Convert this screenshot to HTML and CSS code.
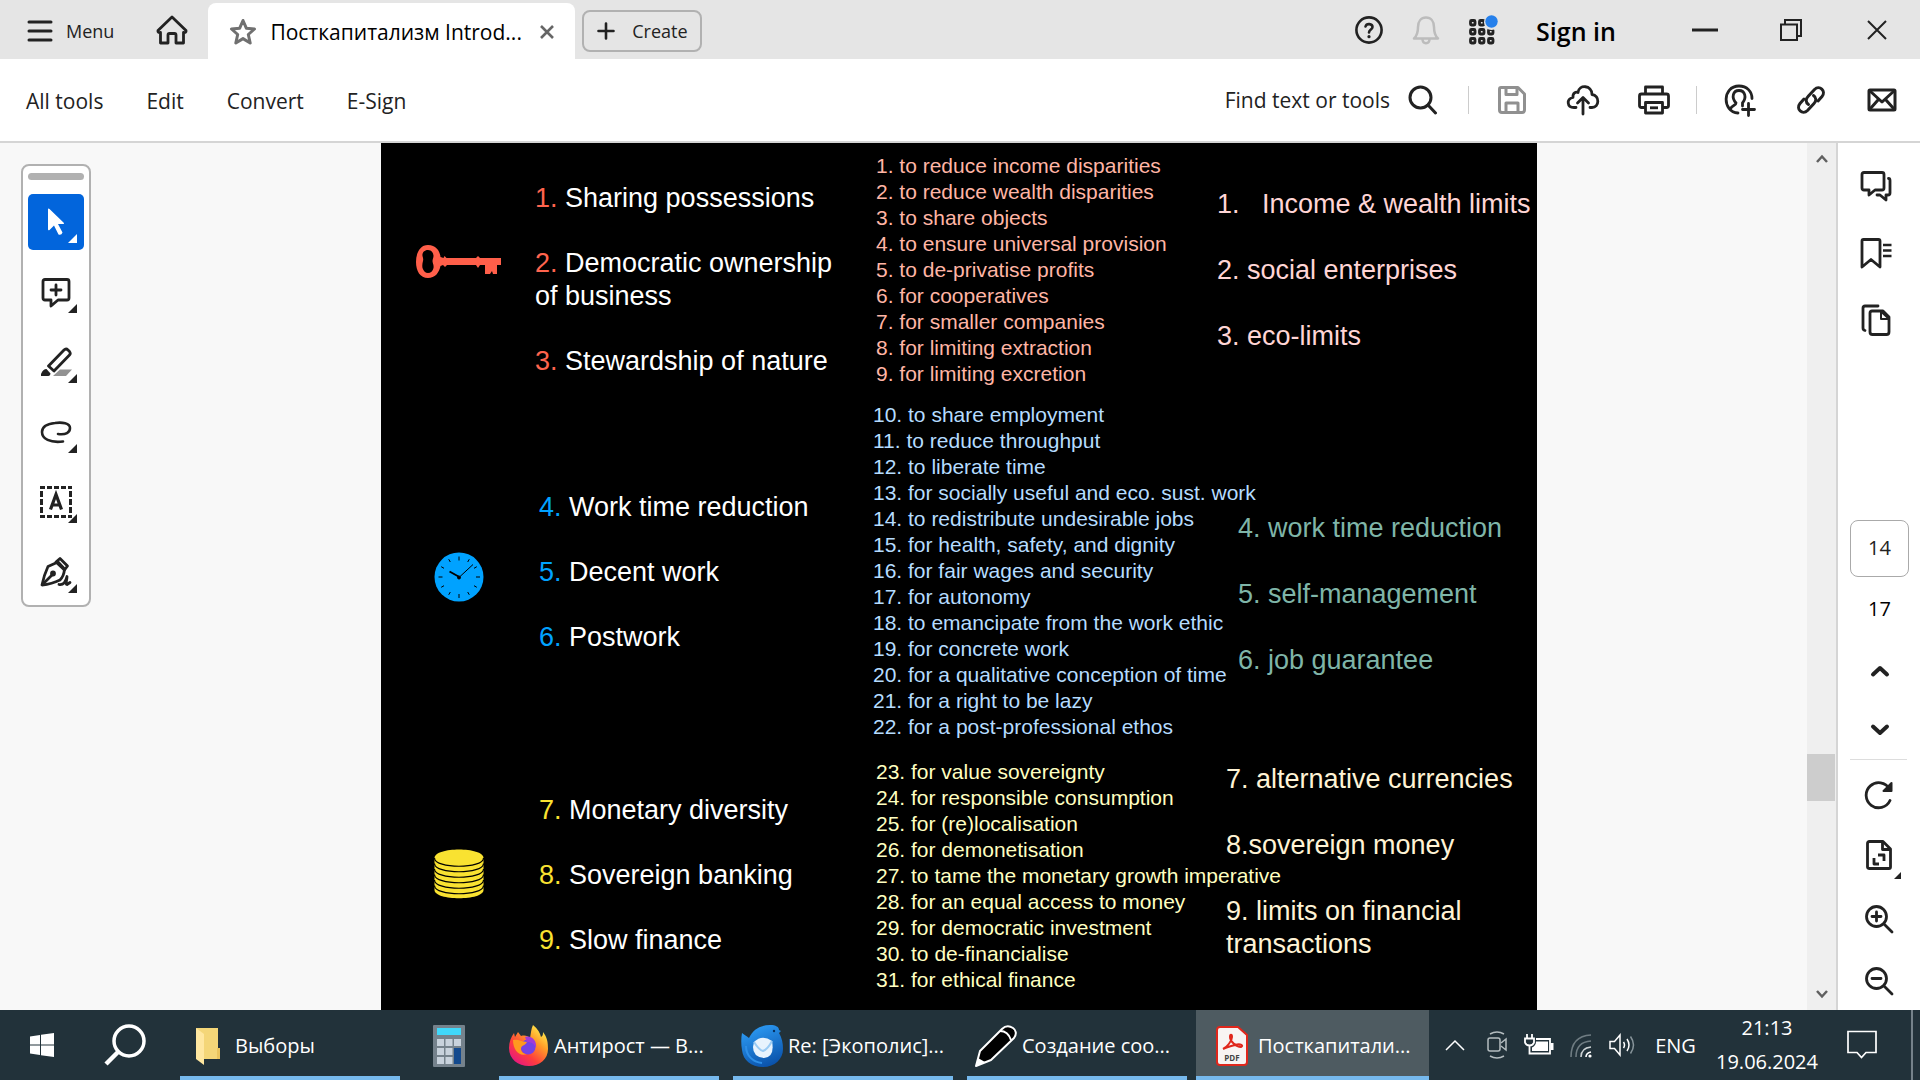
FILE: index.html
```html
<!DOCTYPE html>
<html lang="en">
<head>
  <meta charset="UTF-8" />
  <meta name="viewport" content="width=device-width, initial-scale=1" />
  <title>Посткапитализм Introduction</title>
  <link rel="stylesheet" href="styles.css">
</head>
<body>
  <header class="titlebar">
    <button class="menu-btn">
      <svg width="26" height="22" viewBox="0 0 26 22" stroke="#222" stroke-width="3" stroke-linecap="round"><path d="M2 2h22M2 11h22M2 20h22"/></svg>
      Menu
    </button>
    <button class="home-btn" aria-label="Home">
      <svg width="32" height="30" viewBox="0 0 32 30" fill="none" stroke="#222" stroke-width="2.800" stroke-linejoin="round"><path d="M16 2L30 15.500Q30.500 18 27.500 17.500V28H20V20Q20 18.500 18.500 18.500H13.500Q12 18.500 12 20V28H4.500V17.500Q1.500 18 2 15.500Z"/></svg>
    </button>
    <div class="tab">
      <svg width="28" height="28" viewBox="0 0 28 28" fill="none" stroke="#707070" stroke-width="3" stroke-linejoin="round"><path d="M14 2.500l3.300 7.700 8.200.8-6.200 5.500 1.900 8.500L14 20.600 6.800 25l1.900-8.500L2.500 11l8.200-.8z"/></svg>
      <span class="tab-name">Посткапитализм Introd...</span>
      <button class="tab-close" aria-label="Close tab">
        <svg width="14" height="14" viewBox="0 0 14 14" stroke="#666" stroke-width="2.600"><path d="M1 1l12 12M13 1L1 13"/></svg>
      </button>
    </div>
    <button class="create-btn">
      <svg width="18" height="18" viewBox="0 0 18 18" stroke="#222" stroke-width="2.600" stroke-linecap="round"><path d="M9 1.500v15M1.500 9h15"/></svg>
      Create
    </button>
    <div class="title-right">
      <button class="icon-btn" aria-label="Help">
        <svg width="30" height="30" viewBox="0 0 30 30" fill="none" stroke="#222" stroke-width="2.600" stroke-linecap="round"><circle cx="15" cy="15" r="12.600"/><path d="M11.500 11.500c1-3.500 7-3 7 .5 0 2.500-3.500 2.500-3.500 5.500"/><path d="M15 21.500v.2" stroke-width="3.200"/></svg>
      </button>
      <button class="icon-btn" aria-label="Notifications">
        <svg width="28" height="30" viewBox="0 0 28 30" fill="none" stroke="#bcbcbc" stroke-width="2.500" stroke-linejoin="round"><path d="M2 23.500c3.500-3 4-6 4-11.500 0-5.500 3-9.500 8-9.500s8 4 8 9.500c0 5.500.5 8.500 4 11.500z"/><path d="M10.500 24c0 5.500 7 5.500 7 0"/></svg>
      </button>
      <button class="icon-btn" aria-label="Apps">
        <svg width="32" height="32" viewBox="0 0 32 32" fill="none" stroke="#222" stroke-width="2.800"><rect x="3.500" y="6.500" width="4.500" height="4.500" rx="1"/><rect x="12.500" y="6.500" width="4.500" height="4.500" rx="1"/><rect x="3.500" y="15.500" width="4.500" height="4.500" rx="1"/><rect x="12.500" y="15.500" width="4.500" height="4.500" rx="1"/><rect x="21.500" y="15.500" width="4.500" height="4.500" rx="1"/><rect x="3.500" y="24.500" width="4.500" height="4.500" rx="1"/><rect x="12.500" y="24.500" width="4.500" height="4.500" rx="1"/><rect x="21.500" y="24.500" width="4.500" height="4.500" rx="1"/><circle cx="24.500" cy="8.500" r="7.500" fill="#e5e5e5" stroke="none"/><circle cx="24.500" cy="7.500" r="6.200" fill="#2680eb" stroke="none"/></svg>
      </button>
      <button class="signin">Sign in</button>
      <button class="win-btn" aria-label="Minimize">
        <svg width="26" height="24" viewBox="0 0 26 24" stroke="#222" stroke-width="3"><path d="M0 12h26"/></svg>
      </button>
      <button class="win-btn" aria-label="Restore">
        <svg width="24" height="24" viewBox="0 0 24 24" fill="none" stroke="#222" stroke-width="2"><path d="M2 6.500h16v15.500H2z"/><path d="M6 6V2h16v16h-4"/></svg>
      </button>
      <button class="win-btn" aria-label="Close">
        <svg width="20" height="20" viewBox="0 0 20 20" stroke="#222" stroke-width="2"><path d="M1 1l18 18M19 1L1 19"/></svg>
      </button>
    </div>
  </header>

  <nav class="toolbar">
    <a href="#">All tools</a>
    <a href="#">Edit</a>
    <a href="#">Convert</a>
    <a href="#">E-Sign</a>
    <div class="tool-right">
      <button class="find-btn">
        Find text or tools
        <svg width="30" height="30" viewBox="0 0 30 30" fill="none" stroke="#222" stroke-width="3" stroke-linecap="round"><circle cx="12.500" cy="12.500" r="10.500"/><path d="M20 20l7.500 8"/></svg>
      </button>
      <span class="sep"></span>
      <button class="tool-btn" aria-label="Save">
        <svg width="30" height="30" viewBox="0 0 30 30" fill="none" stroke="#909090" stroke-width="3" stroke-linejoin="round"><path d="M4 2.500h17l6.500 6.500v16q0 2.500-2.500 2.500H5q-2.500 0-2.500-2.500V4q0-1.500 1.500-1.500z"/><path d="M9 3v6.500h11V3M9 27v-9h12v9"/></svg>
      </button>
      <button class="tool-btn" aria-label="Upload">
        <svg width="34" height="32" viewBox="0 0 34 32" fill="none" stroke="#222" stroke-width="2.800" stroke-linecap="round" stroke-linejoin="round"><path d="M10 23.500H8c-7 0-8-8.500-1-10C6.500 9 10 7.500 12 8.500 13 0 26 1 26 10.500c8 1 7.500 13 0 13h-2"/><path d="M17 30V14M11.500 19L17 13.500l5.500 5.500"/></svg>
      </button>
      <button class="tool-btn" aria-label="Print">
        <svg width="32" height="32" viewBox="0 0 32 32" fill="none" stroke="#222" stroke-width="2.800" stroke-linejoin="round"><path d="M7.500 10V3h17v7M7.500 23.500h-4q-2 0-2-2V12q0-2 2-2h25q2 0 2 2v9.500q0 2-2 2h-4"/><path d="M7.500 18.500h17V29h-17z"/><path d="M12 23.800h8"/></svg>
      </button>
      <span class="sep"></span>
      <button class="tool-btn" aria-label="Add people">
        <svg width="32" height="34" viewBox="0 0 32 34" fill="none" stroke="#222" stroke-width="2.800" stroke-linecap="round"><path d="M14 30C-2 29-2 3 15 3c8 0 13 5.500 13 12.500"/><path d="M6.500 26c1-4 5.500-3 5.500-6-5-5.500-3-12.500 3-12.500s8 7 3.500 12.500V23"/><path d="M24.500 20.500v12M18.500 26.500h12"/></svg>
      </button>
      <button class="tool-btn" aria-label="Link">
        <svg width="30" height="30" viewBox="0 0 30 30" fill="none" stroke="#222" stroke-width="3" stroke-linecap="round"><path d="M12.500 19.500c-3-2-3-5.500-.5-8l6.500-7c5-5 12 1.500 7.500 7l-4 4.500"/><path d="M17.500 10.500c3 2 3 5.500.5 8l-6.500 7c-5 5-12-1.500-7.500-7L8 14"/></svg>
      </button>
      <button class="tool-btn" aria-label="Mail">
        <svg width="30" height="24" viewBox="0 0 30 24" fill="none" stroke="#222" stroke-width="3" stroke-linejoin="round"><rect x="2" y="2" width="26" height="20" rx="1"/><path d="M3 3l12 11L27 3M3 21l8-9M27 21l-8-9"/></svg>
      </button>
    </div>
  </nav>

  <main class="viewer">
    <aside class="quick-tools">
      <span class="handle"></span>
      <button class="quick selected" aria-label="Select">
        <svg width="18" height="28" viewBox="0 0 18 28"><path d="M1 1.500Q1 0 2.500 1L17 15q.5 1-1 1h-5l4.500 8.500q-1 3-4 2L7 17.500 2.500 22Q1 23 1 21z" fill="#fff"/></svg>
      </button>
      <button class="quick" aria-label="Add comment">
        <svg width="32" height="32" viewBox="0 0 32 32" fill="none" stroke="#222" stroke-width="2.800" stroke-linecap="round" stroke-linejoin="round"><path d="M5 3.500h22q2 0 2 2V22q0 2-2 2H18l-7 6v-6H5q-2 0-2-2V5.500q0-2 2-2z"/><path d="M16 9v10M11 14h10"/></svg>
      </button>
      <button class="quick" aria-label="Highlight">
        <svg width="32" height="32" viewBox="0 0 32 32" fill="none" stroke="#222" stroke-width="2.800" stroke-linejoin="round"><path d="M8.500 20L24 4q2-2 4 0l1.500 1.500q1.500 2 0 3.500L14 25z"/><path d="M1 30v-2q2-5 5.500-5l4 4.500q0 2-2 2.500z" fill="#222" stroke="none"/><path d="M20 23.500h12L26 30H13z" fill="#929292" stroke="none"/></svg>
      </button>
      <button class="quick" aria-label="Draw">
        <svg width="32" height="32" viewBox="0 0 32 32" fill="none" stroke="#222" stroke-width="2.600" stroke-linecap="round"><path d="M18 18c8 1 12-1.500 12-6C30 7 22 6 15 7 6 8 2 11.500 2 16c0 7 8 11 21 9.500"/></svg>
      </button>
      <button class="quick" aria-label="Select text">
        <svg width="32" height="32" viewBox="0 0 32 32" fill="none" stroke="#222" stroke-width="3"><path d="M0 1.500h32M0 30.500h32" stroke-dasharray="5 2"/><path d="M1.500 5v22M30.500 5v22" stroke-dasharray="6 2"/><path d="M10.500 23.500L16 8.500l5.500 15M12.500 19h7" stroke-width="3.200"/></svg>
      </button>
      <button class="quick" aria-label="Sign">
        <svg width="32" height="32" viewBox="0 0 32 32" fill="none" stroke="#222" stroke-width="2.800" stroke-linecap="round" stroke-linejoin="round"><path d="M18 6L8 10.500Q4 19 2 29q10-1 18-5 4-4 4.500-11z"/><path d="M16 6l4-3.500 7.500 7.500-3 4zM2.500 28.500L13 18"/><circle cx="13" cy="17.500" r="1.500" fill="#222"/><path d="M19 28.500c5 1 7-4 8-8 0 4-2 8 0 8l3-2"/></svg>
      </button>
    </aside>

    <article class="slide">
      <section class="theme ownership">
        <svg class="theme-icon" width="86" height="34" viewBox="0 0 86 34"><path fill="#ff5f4a" fill-rule="evenodd" d="M12 0c8 0 12 6 12.500 12l3 1 1-2 2 2H60l2-2 2 2h21v7h-4v9h-4l-1-3-2 3h-5v-9h-5l-2 3-2-3H31l-2 2-2-2-2.500 1C23 28 19 33 12 33 4 33 0 26 0 17S4 0 12 0zm0 5c-4 0-6 3-5.500 6 .5 2 1 3 .5 5s-1 4-.5 7c1 3 3 5 5.500 5s5-2 5.500-5c.5-3-1-5-1-7s1-3 1-5c0-3-2-6-5.500-6z"/></svg>
        <ol class="goals">
          <li><span class="num">1.</span> Sharing possessions</li>
          <li><span class="num">2.</span> Democratic ownership<br>of business</li>
          <li><span class="num">3.</span> Stewardship of nature</li>
        </ol>
        <ol class="details">
          <li>1. to reduce income disparities</li>
          <li>2. to reduce wealth disparities</li>
          <li>3. to share objects</li>
          <li>4. to ensure universal provision</li>
          <li>5. to de-privatise profits</li>
          <li>6. for cooperatives</li>
          <li>7. for smaller companies</li>
          <li>8. for limiting extraction</li>
          <li>9. for limiting excretion</li>
        </ol>
        <ol class="policies">
          <li>1.&nbsp; &nbsp;Income &amp; wealth limits</li>
          <li>2. social enterprises</li>
          <li>3. eco-limits</li>
        </ol>
      </section>

      <section class="theme work">
        <svg class="theme-icon" width="50" height="50" viewBox="0 0 50 50" stroke="#000"><circle cx="25" cy="25" r="24.500" fill="#00a2ff" stroke="none"/><path d="M25 4.500v4M25 42v4M4.500 25h4M42 25h4M14.700 7.200l1.600 2.800M33.700 40l1.600 2.800M7.200 14.700l2.800 1.600M40 33.700l2.800 1.600M35.300 7.200L33.700 10M16.300 40l-1.600 2.800M42.800 14.700L40 16.300M10 33.700l-2.800 1.600M26 24.500L39 12.500"/><path d="M15.500 19.500l9 5" stroke-width="2"/><circle cx="25" cy="25.500" r="1.500"/></svg>
        <ol class="goals">
          <li><span class="num">4.</span> Work time reduction</li>
          <li><span class="num">5.</span> Decent work</li>
          <li><span class="num">6.</span> Postwork</li>
        </ol>
        <ol class="details">
          <li>10. to share employment</li>
          <li>11. to reduce throughput</li>
          <li>12. to liberate time</li>
          <li>13. for socially useful and eco. sust. work</li>
          <li>14. to redistribute undesirable jobs</li>
          <li>15. for health, safety, and dignity</li>
          <li>16. for fair wages and security</li>
          <li>17. for autonomy</li>
          <li>18. to emancipate from the work ethic</li>
          <li>19. for concrete work</li>
          <li>20. for a qualitative conception of time</li>
          <li>21. for a right to be lazy</li>
          <li>22. for a post-professional ethos</li>
        </ol>
        <ol class="policies">
          <li>4. work time reduction</li>
          <li>5. self-management</li>
          <li>6. job guarantee</li>
        </ol>
      </section>

      <section class="theme money">
        <svg class="theme-icon" width="50" height="50" viewBox="0 0 50 50"><path d="M.5 9C.5-2.500 49.500-2.500 49.500 9v32c0 11-49 11-49 0z" fill="#f9e231"/><path fill="none" stroke="#000" stroke-width="1.200" d="M.5 9c0 11 49 11 49 0M.5 14.500c0 11 49 11 49 0M.5 20c0 11 49 11 49 0M.5 25.500c0 11 49 11 49 0M.5 31c0 11 49 11 49 0M.5 36.500c0 11 49 11 49 0"/></svg>
        <ol class="goals">
          <li><span class="num">7.</span> Monetary diversity</li>
          <li><span class="num">8.</span> Sovereign banking</li>
          <li><span class="num">9.</span> Slow finance</li>
        </ol>
        <ol class="details">
          <li>23. for value sovereignty</li>
          <li>24. for responsible consumption</li>
          <li>25. for (re)localisation</li>
          <li>26. for demonetisation</li>
          <li>27. to tame the monetary growth imperative</li>
          <li>28. for an equal access to money</li>
          <li>29. for democratic investment</li>
          <li>30. to de-financialise</li>
          <li>31. for ethical finance</li>
        </ol>
        <ol class="policies">
          <li>7. alternative currencies</li>
          <li>8.sovereign money</li>
          <li>9. limits on financial<br>transactions</li>
        </ol>
      </section>
    </article>

    <div class="scrollbar">
      <button aria-label="Scroll up"><svg width="12" height="10" viewBox="0 0 12 10" fill="none" stroke="#606060" stroke-width="2.500"><path d="M1 8l5-5.500L11 8"/></svg></button>
      <span class="thumb"></span>
      <button class="down" aria-label="Scroll down"><svg width="12" height="10" viewBox="0 0 12 10" fill="none" stroke="#606060" stroke-width="2.500"><path d="M1 2l5 5.500L11 2"/></svg></button>
    </div>

    <aside class="side-panel">
      <div class="panel-tools">
        <button aria-label="Comments">
          <svg width="32" height="32" viewBox="0 0 32 32" fill="none" stroke="#222" stroke-width="2.800" stroke-linecap="round" stroke-linejoin="round"><path d="M4 2.500h18q2 0 2 2V18q0 2-2 2h-7l-6 5v-5H4q-2 0-2-2V4.500q0-2 2-2z"/><path d="M28.500 8.500q1.500 0 1.500 2V23q0 2-2 2h-2v5l-6-5h-3"/></svg>
        </button>
        <button aria-label="Bookmarks">
          <svg width="32" height="32" viewBox="0 0 32 32" fill="none" stroke="#222" stroke-width="2.800" stroke-linejoin="round"><path d="M3.500 2.500h15q1.500 0 1.500 1.500v26l-9-7.500L2 30V4q0-1.500 1.500-1.500z"/><path d="M23 8h8.500M23 13.500h8.500M23 19h8.500" stroke-width="2.500"/></svg>
        </button>
        <button aria-label="Page thumbnails">
          <svg width="32" height="32" viewBox="0 0 32 32" fill="none" stroke="#222" stroke-width="2.800" stroke-linecap="round" stroke-linejoin="round"><path d="M18 2H5Q3 2 3 4v20q0 2 2 2.500"/><path d="M12 7h11l6 6v15q0 2.500-2.500 2.500h-14Q10 30.500 10 28V9q0-2 2-2z"/><path d="M21 7.500V15h8z" stroke-width="2"/></svg>
        </button>
      </div>
      <div class="page-nav">
        <input class="page-input" type="text" value="14" aria-label="Page number">
        <span class="page-total">17</span>
        <button aria-label="Previous page"><svg width="20" height="14" viewBox="0 0 20 14" fill="none" stroke="#222" stroke-width="4" stroke-linecap="round" stroke-linejoin="round"><path d="M3 10.500L10 4l7 6.500"/></svg></button>
        <button aria-label="Next page"><svg width="20" height="14" viewBox="0 0 20 14" fill="none" stroke="#222" stroke-width="4" stroke-linecap="round" stroke-linejoin="round"><path d="M3 3.500L10 10l7-6.500"/></svg></button>
      </div>
      <div class="zoom-nav">
        <button aria-label="Rotate">
          <svg width="30" height="30" viewBox="0 0 30 30" fill="none" stroke="#222" stroke-width="2.800" stroke-linecap="round" stroke-linejoin="round"><path d="M26 20.500A12.500 12.500 0 1 1 25.500 9"/><path d="M27.500 3v8H19.500z" fill="#222" stroke-width="2"/></svg>
        </button>
        <button class="has-more" aria-label="Fit page">
          <svg width="28" height="32" viewBox="0 0 28 32" fill="none" stroke="#222" stroke-width="2.800" stroke-linejoin="round"><path d="M4.500 2.500H18l7.500 7.500v18q0 1.500-1.500 1.500H4.500Q2.500 29.500 2.500 28V4.500q0-2 2-2z"/><path d="M17.500 3v7.500H25M9 19v6h5M13 16h6v6" /></svg>
        </button>
        <button aria-label="Zoom in">
          <svg width="30" height="30" viewBox="0 0 30 30" fill="none" stroke="#222" stroke-width="2.800" stroke-linecap="round"><circle cx="12.500" cy="12.500" r="10"/><path d="M20 20l8 8M12.500 8v9M8 12.500h9"/></svg>
        </button>
        <button aria-label="Zoom out">
          <svg width="30" height="30" viewBox="0 0 30 30" fill="none" stroke="#222" stroke-width="2.800" stroke-linecap="round"><circle cx="12.500" cy="12.500" r="10"/><path d="M20 20l8 8M8 12.500h9"/></svg>
        </button>
      </div>
    </aside>
  </main>

  <footer class="taskbar">
    <button class="start" aria-label="Start">
      <svg width="24" height="24" viewBox="0 0 24 24" fill="#fff"><path d="M0 3.500L10 2v9.500H0zM11 1.800L24 0v11.500H11zM0 12.500h10V22L0 20.500zM11 12.500h13V24l-13-1.800z"/></svg>
    </button>
    <button class="start" aria-label="Search">
      <svg width="42" height="42" viewBox="0 0 42 42" fill="none" stroke="#fff"><circle cx="25" cy="17" r="15" stroke-width="3.500"/><path d="M14.500 27.500L2 40" stroke-width="4.500"/></svg>
    </button>
    <div class="apps">
      <button class="app">
        <svg width="42" height="42" viewBox="0 0 42 42"><path d="M8 3h22v20l2 2v9H12z" fill="#f4d678"/><path d="M8 3l8 6v31l-8-6z" fill="#ffe7a0"/><path d="M29 23h3v11h-3z" fill="#eac45e"/></svg>
        Выборы
      </button>
      <button class="app small" aria-label="Calculator">
        <svg width="32" height="42" viewBox="0 0 32 42"><rect width="32" height="42" rx="1" fill="#75828c"/><rect x="4" y="3" width="24" height="7" fill="#40d8fa"/><g fill="#c8d2dc"><rect x="4" y="14" width="7" height="7"/><rect x="12.500" y="14" width="7" height="7"/><rect x="21" y="14" width="7" height="7"/><rect x="4" y="23" width="7" height="7"/><rect x="12.500" y="23" width="7" height="7"/><rect x="4" y="32" width="7" height="7"/><rect x="12.500" y="32" width="7" height="7"/></g><rect x="21" y="23" width="7" height="16" fill="#134a8e"/></svg>
      </button>
      <button class="app">
        <svg width="42" height="42" viewBox="0 0 42 42">
          <defs><linearGradient id="fox" x1="1" y1="0" x2=".2" y2="1"><stop offset=".1" stop-color="#fff44f"/><stop offset=".4" stop-color="#ff9a28"/><stop offset=".7" stop-color="#ff3d3d"/><stop offset="1" stop-color="#e31587"/></linearGradient></defs>
          <path fill="url(#fox)" d="M26 0c5 4 7 8 8 12 2-1 2-3 2-5 4 5 5 10 5 17 0 10-8 17-19 17S2 34 2 23C2 17 4 12 7 8l1 4 3-5 3 4c4-1 7 0 9 2 1-5 1-9 3-13z"/>
          <circle cx="21" cy="22" r="7.500" fill="#7542e5"/><path d="M18 12c7-2 12 4 11 11-2-4-4-6-9-6z" fill="#a13bd8"/><path fill="#ff9a1f" d="M6 15c6-1 8 2 14 2-2 4-6 3-6 7 0 3 3 5 6 5-8 3-14-4-14-14z"/>
        </svg>
        Антирост — В...
      </button>
      <button class="app">
        <svg width="42" height="42" viewBox="0 0 42 42">
          <defs><linearGradient id="bird" x1=".3" y1="0" x2=".7" y2="1"><stop offset="0" stop-color="#2d9cf5"/><stop offset="1" stop-color="#0950a8"/></linearGradient></defs>
          <path fill="url(#bird)" d="M1 8c2 2 5 3 7 5C12 4 20 0 29 0c6 0 9 2 9 5l2 1-2 2c3 5 4 10 4 16 0 10-8 18-20 18S2 35 1 25c-1-6-1-12 0-17z"/><path d="M13 17q8-8 18-1 3 16-8 17-11-1-11-11z" fill="#e8f3fd"/><path d="M13 17q5 8 9 9 5-2 9-10" fill="none" stroke="#9acbf4" stroke-width="2"/><path d="M5 21c0 10 7 16 16 17" fill="none" stroke="#2d8fe8" stroke-width="2"/><circle cx="33" cy="6" r="1.200" fill="#06305f"/>
        </svg>
        Re: [Экополис]...
      </button>
      <button class="app">
        <svg width="42" height="42" viewBox="0 0 42 42" fill="#000" stroke="#fff" stroke-width="2" stroke-linejoin="round"><path d="M1 41l4-15L27 4c4-4 8-3 11-1s4 6 1 10L16 35z"/><path d="M25 6c5 0 9 3 11 9" fill="none"/><path d="M3 33l7 4-9 4z" fill="#fff" stroke="none"/></svg>
        Создание соо...
      </button>
      <button class="app active">
        <svg width="42" height="42" viewBox="0 0 42 42"><path d="M9 2h18l9 8v27q0 3-3 3H9q-3 0-3-3V5q0-3 3-3z" fill="#f8f4f3" stroke="#e0271c" stroke-width="2"/><path d="M12 24c4-2 9-8 9-12 0-3-2-3-2 0 0 4 6 10 11 10 3-1 0-4-6-2-4 1-8 2-12 4z" fill="none" stroke="#e0271c" stroke-width="2"/><text x="21" y="36" text-anchor="middle" class="pdf-label">PDF</text></svg>
        Посткапитали...
      </button>
    </div>
    <div class="tray">
      <button aria-label="Show hidden icons"><svg width="20" height="12" viewBox="0 0 20 12" fill="none" stroke="#fff" stroke-width="1.500"><path d="M1 11l9-9 9 9"/></svg></button>
      <button aria-label="Camera"><svg width="20" height="28" viewBox="0 0 20 28" fill="none" stroke="#b5bdc0" stroke-width="1.500"><rect x="1" y="7" width="12" height="13" rx="2"/><path d="M14 12l5-4v11l-5-4M3 3q7-4 14 0M3 25q7 4 14 0"/></svg></button>
      <button aria-label="Battery"><svg width="30" height="24" viewBox="0 0 30 24" fill="none" stroke="#fff" stroke-width="1.800"><path d="M3 1v4M8 1v4M1 5.500h9v4q-1 3-4.500 3T1 9.500zM5.500 12v8.500H26V6H12"/><path d="M12 8.500h12v9.500H8v-3.500q4-2 4-6z" fill="#fff" stroke="none"/><path d="M28 10v7" stroke-width="3"/></svg></button>
      <button aria-label="Network"><svg width="24" height="26" viewBox="0 0 24 26" fill="none" stroke="#6f7c82" stroke-width="1.600"><path d="M2 25Q2 4 22 3M7 25Q7 10 22 9"/><path d="M12 25q0-9 10-10" stroke="#ccd2d4"/><path d="M17 25q0-4 5-5" stroke="#fff"/><circle cx="21" cy="24" r="1.600" fill="#fff" stroke="none"/></svg></button>
      <button aria-label="Volume"><svg width="28" height="24" viewBox="0 0 28 24" fill="none" stroke="#fff" stroke-width="1.500"><path d="M1 8.500h4.500L11 2v20l-5.500-6.500H1zM14.500 9q2 3 0 6M18 6q4 6 0 12"/><path d="M21.500 3.500q6 8.500 0 17" stroke="#87949a"/></svg></button>
      <button class="lang">ENG</button>
      <button class="clock"><span>21:13</span><span>19.06.2024</span></button>
      <button class="notes" aria-label="Notifications"><svg width="30" height="30" viewBox="0 0 30 30" fill="none" stroke="#fff" stroke-width="1.700"><path d="M1 1.500h28v21H19l-4.500 5-4.500-5H1z"/></svg></button>
      <span class="edge"></span>
    </div>
  </footer>
</body>
</html>
```
FILE: styles.css
```css
* {
  box-sizing: border-box;
}
body {
  margin: 0;
  height: 100vh;
  display: flex;
  flex-direction: column;
  overflow: hidden;
  font-family: "Open Sans", "Noto Sans", sans-serif;
  font-size: 20px;
  color: #222;
  background: #f8f8f8;
}
button {
  display: flex;
  align-items: center;
  justify-content: center;
  padding: 0;
  border: none;
  background: none;
  font: inherit;
  color: inherit;
  white-space: nowrap;
}
svg {
  flex: none;
}
ol {
  list-style: none;
  margin: 0;
  padding: 0;
}

/* title bar */
.titlebar {
  flex: none;
  height: 59px;
  display: flex;
  align-items: center;
  background: #e5e5e5;
}
.menu-btn {
  margin-left: 27px;
  padding-top: 2px;
  gap: 13px;
  font-size: 18px;
}
.home-btn {
  width: 94px;
  height: 59px;
  padding-left: 22px;
}
.tab {
  align-self: flex-end;
  width: 367px;
  height: 56px;
  padding: 2px 21px 0;
  display: flex;
  align-items: center;
  background: #fff;
  border-radius: 8px 8px 0 0;
}
.tab-name {
  margin-left: 13px;
  font-size: 21px;
  color: #000;
  white-space: nowrap;
}
.tab-close {
  margin-left: auto;
}
.create-btn {
  width: 120px;
  height: 42px;
  margin-top: 3px;
  margin-left: 7px;
  gap: 17px;
  border: 2px solid #b1b1b1;
  border-radius: 8px;
  font-size: 18px;
}
.title-right {
  margin-left: auto;
  display: flex;
  align-items: center;
}
.icon-btn {
  width: 57px;
}
.signin {
  width: 130px;
  margin-right: 21px;
  padding-top: 2px;
  font-size: 25px;
  font-weight: 600;
  color: #000;
}
.win-btn {
  width: 86px;
  height: 56px;
}

/* toolbar */
.toolbar {
  flex: none;
  height: 84px;
  padding: 0 3px 0 26px;
  display: flex;
  align-items: center;
  gap: 43px;
  background: #fff;
  border-bottom: 2px solid #d5d5d5;
  font-size: 21px;
}
.toolbar a {
  padding-top: 2px;
  color: inherit;
  text-decoration: none;
}
.tool-right {
  margin-left: auto;
  display: flex;
  align-items: center;
}
.find-btn {
  gap: 18px;
  margin-right: 23px;
}
.sep {
  width: 1px;
  height: 28px;
  margin: 0 7px;
  background: #ccc;
}
.tool-btn {
  width: 71px;
  height: 56px;
}

/* document area */
.viewer {
  flex: 1;
  min-height: 0;
  display: flex;
  align-items: stretch;
}
.quick-tools {
  align-self: flex-start;
  width: 70px;
  margin: 21px 0 0 21px;
  padding: 7px 5px 5px;
  display: flex;
  flex-direction: column;
  gap: 14px;
  background: #fff;
  border: 2px solid #b1b1b1;
  border-radius: 8px;
}
.handle {
  height: 7px;
  background: #b1b1b1;
  border-radius: 4px;
}
.quick {
  position: relative;
  height: 56px;
  border-radius: 5px;
}
.quick.selected {
  background: #0265dc;
}
.quick::after,
.has-more::after {
  content: "";
  position: absolute;
  right: 7px;
  bottom: 7px;
  border-bottom: 9px solid #222;
  border-left: 9px solid transparent;
}
.quick.selected::after {
  border-bottom-color: #fff;
}
.slide {
  flex: 1;
  min-width: 0;
  margin: 0 270px 0 290px;
  padding-top: 10px;
  overflow: hidden;
  background: #000;
  color: #fff;
  font-family: "Liberation Sans", Arial, sans-serif;
  font-size: 27px;
  line-height: 33px;
  white-space: nowrap;
}
.theme {
  display: grid;
  align-items: start;
}
.theme > * {
  min-width: 0;
}
.goals,
.policies {
  display: flex;
  flex-direction: column;
  gap: 32px;
}
.policies {
  gap: 33px;
}
.details {
  font-size: 21px;
  line-height: 26px;
}
.ownership {
  grid-template-columns: 154fr 341fr 341fr 320fr;
}
.ownership .theme-icon {
  margin: 92px 0 0 35px;
}
.ownership .goals {
  padding-top: 29px;
}
.ownership .policies {
  padding-top: 35px;
  color: #ffd5d5;
}
.ownership .num {
  color: #ff644e;
}
.ownership .details {
  color: #ffb5a5;
}
.work {
  margin-top: 15px;
  grid-template-columns: 158fr 334fr 365fr 299fr;
}
.work .theme-icon {
  margin: 150px 0 0 53px;
}
.work .goals {
  padding-top: 89px;
}
.work .policies {
  padding-top: 110px;
  color: #7fb5a8;
}
.work .num {
  color: #00a2ff;
}
.work .details {
  color: #b5dcff;
}
.money {
  margin-top: 19px;
  grid-template-columns: 158fr 337fr 350fr 311fr;
}
.money .theme-icon {
  margin: 90px 0 0 53px;
}
.money .goals {
  padding-top: 35px;
}
.money .policies {
  padding-top: 4px;
  color: #fff3d5;
}
.money .num {
  color: #f9e231;
}
.money .details {
  color: #ffffc0;
}

.scrollbar {
  width: 29px;
  padding: 11px 0;
  display: flex;
  flex-direction: column;
  background: #efefef;
}
.scrollbar .thumb {
  height: 47px;
  margin: auto 1px 0 0;
  background: #cdcdcd;
}
.scrollbar .down {
  margin-top: 188px;
}
.side-panel {
  width: 84px;
  padding: 9px 11px 0 12px;
  display: flex;
  flex-direction: column;
  background: #fff;
  border-left: 2px solid #d5d5d5;
}
.side-panel button {
  width: 100%;
}
.panel-tools {
  margin-right: 8px;
}
.panel-tools button {
  height: 67px;
}
.page-nav {
  margin-top: 167px;
  display: flex;
  flex-direction: column;
  align-items: center;
}
.page-input {
  width: 59px;
  height: 57px;
  padding: 0 0 2px;
  border: 1px solid #aaa;
  border-radius: 8px;
  font: inherit;
  color: #222;
  text-align: center;
}
.page-total {
  height: 64px;
  line-height: 64px;
  color: #000;
}
.page-nav button {
  height: 59px;
}
.zoom-nav {
  margin-right: 2px;
  padding-top: 4px;
  border-top: 1px solid #ddd;
}
.zoom-nav button {
  position: relative;
  height: 62px;
}
.zoom-nav .has-more {
  padding-bottom: 4px;
}
.has-more::after {
  right: 6px;
  bottom: 9px;
  border-bottom-width: 7px;
  border-left-width: 7px;
}

/* taskbar */
.taskbar {
  flex: none;
  height: 70px;
  display: flex;
  background: #22323a;
  color: #fff;
}
.start {
  width: 83px;
}
.apps {
  display: flex;
  gap: 14px;
  margin-left: 14px;
}
.app {
  width: 220px;
  padding: 5px 0 0 8px;
  justify-content: flex-start;
  gap: 5px;
  border-bottom: 4px solid #76b9ed;
}
.app.small {
  width: 71px;
  padding-left: 19px;
  border-color: transparent;
}
.app.active {
  width: 233px;
  margin-left: -5px;
  padding-left: 15px;
  background: #4e5b61;
}
.pdf-label {
  font-size: 8px;
  font-weight: bold;
  fill: #444;
}
.tray {
  margin-left: auto;
  display: flex;
}
.tray button {
  width: 42px;
}
.tray .lang {
  width: 63px;
}
.tray .clock {
  width: 120px;
  flex-direction: column;
  line-height: 34px;
}
.tray .notes {
  width: 70px;
}
.edge {
  width: 9px;
  margin-left: 14px;
  border-left: 2px solid #75828a;
}
```
